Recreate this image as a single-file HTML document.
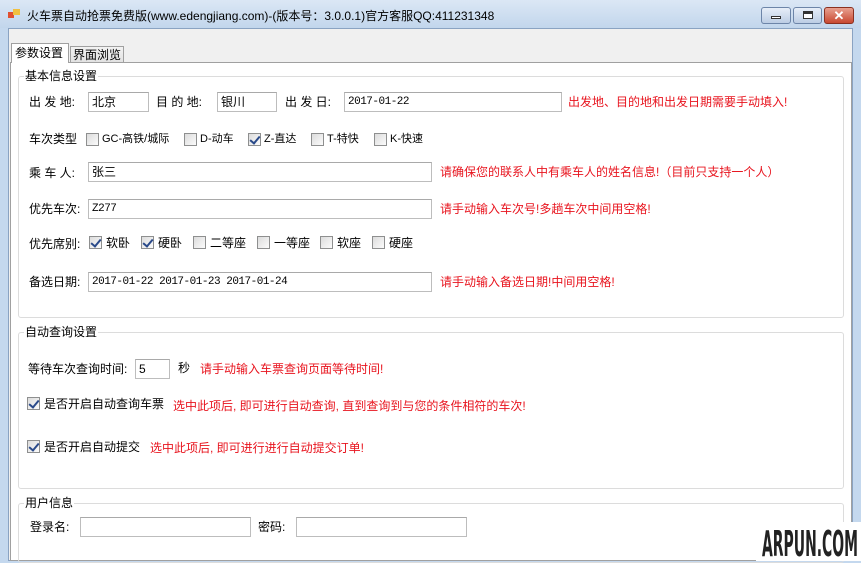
<!DOCTYPE html>
<html><head><meta charset="utf-8"><style>
*{margin:0;padding:0;box-sizing:border-box}
body{width:861px;height:561px;overflow:hidden;position:relative;background:#c4d8ee;font-family:"Liberation Sans","Noto Sans CJK SC",sans-serif;font-size:12px;color:#000}
.a{position:absolute;white-space:nowrap;line-height:14px}
.title{position:absolute;left:0;top:0;width:861px;height:28px;background:linear-gradient(#dbe7f5,#c2d6ec)}
.client{position:absolute;left:8px;top:28px;width:845px;height:533px;background:#f0f0f0;border:1px solid #8aa3c2}
.panel{position:absolute;left:10px;top:62px;width:842px;height:499px;background:#fff;border:1px solid #a0a0a0}
.grp{position:absolute;border:1px solid #dcdcdc;border-radius:3px}
.gl{position:absolute;background:#fff;padding:0 1px;line-height:14px}
.in{position:absolute;height:20px;border:1px solid #bdbdbd;border-top-color:#a9a9a9;background:#fff;font-size:11px;line-height:18px;padding-left:3px;font-family:"Liberation Mono","Noto Sans CJK SC",monospace;letter-spacing:-0.5px}
.in.c{font-family:"Liberation Sans","Noto Sans CJK SC",sans-serif;font-size:12px;letter-spacing:0}
.cb{position:absolute;width:13px;height:13px;border:1px solid #8e8f8f;background:linear-gradient(135deg,#dcdcdc,#fbfbfb)}
.cb.k::after{content:"";position:absolute;left:3px;top:0px;width:4px;height:8px;border:solid #2a4a8a;border-width:0 2px 2px 0;transform:rotate(40deg)}
.r{color:#e8141e}
.btn{position:absolute;top:7px;height:17px;border:1px solid #6d85a8;border-radius:3px;background:linear-gradient(#e7eef8,#bccde4)}
</style></head><body>
<div class="title"></div>
<div class="a" style="left:8px;top:9px;width:12px;height:10px"><div style="position:absolute;left:0;top:3px;width:6px;height:6px;background:#e05030"></div><div style="position:absolute;left:5px;top:0;width:7px;height:6px;background:#f0c040"></div></div>
<div class="a" style="left:27px;top:9px;font-size:12px">火车票自动抢票免费版(www.edengjiang.com)-(版本号：3.0.0.1)官方客服QQ:411231348</div>
<div class="btn" style="left:761px;width:30px"><div style="position:absolute;left:9px;top:8px;width:10px;height:3px;background:#fff;border:1px solid #333"></div></div>
<div class="btn" style="left:793px;width:29px"><div style="position:absolute;left:9px;top:3px;width:10px;height:8px;border:1px solid #333;border-top-width:3px;background:#fff"></div></div>
<div class="btn" style="left:824px;width:30px;background:linear-gradient(#e8a090,#c84830);border-color:#8a3020;color:#fff;font-weight:bold;text-align:center;line-height:15px;font-size:13px">✕</div>
<div class="client"></div>
<div class="a" style="left:70px;top:46px;width:54px;height:17px;border:1px solid #a0a0a0;background:linear-gradient(#f3f3f3,#e2e2e2);padding:1px 2px">界面浏览</div>
<div class="panel"></div>
<div class="a" style="left:11px;top:43px;width:58px;height:20px;border:1px solid #a0a0a0;border-bottom:none;background:#fff;padding:2px 3px">参数设置</div>

<div class="grp" style="left:18px;top:76px;width:826px;height:242px"></div>
<div class="gl" style="left:24px;top:69px">基本信息设置</div>
<div class="a" style="left:29px;top:95px">出 发 地:</div>
<div class="in c" style="left:88px;top:92px;width:61px">北京</div>
<div class="a" style="left:156px;top:95px">目 的 地:</div>
<div class="in c" style="left:217px;top:92px;width:60px">银川</div>
<div class="a" style="left:285px;top:95px">出 发 日:</div>
<div class="in" style="left:344px;top:92px;width:218px">2017-01-22</div>
<div class="a r" style="left:568px;top:95px">出发地、目的地和出发日期需要手动填入!</div>

<div class="a" style="left:29px;top:132px">车次类型</div>
<div class="cb" style="left:86px;top:133px"></div><div class="a" style="left:102px;top:132px;font-size:11px">GC-高铁/城际</div>
<div class="cb" style="left:184px;top:133px"></div><div class="a" style="left:200px;top:132px;font-size:11px">D-动车</div>
<div class="cb k" style="left:248px;top:133px"></div><div class="a" style="left:264px;top:132px;font-size:11px">Z-直达</div>
<div class="cb" style="left:311px;top:133px"></div><div class="a" style="left:327px;top:132px;font-size:11px">T-特快</div>
<div class="cb" style="left:374px;top:133px"></div><div class="a" style="left:390px;top:132px;font-size:11px">K-快速</div>

<div class="a" style="left:29px;top:166px">乘 车 人:</div>
<div class="in c" style="left:88px;top:162px;width:344px">张三</div>
<div class="a r" style="left:440px;top:165px">请确保您的联系人中有乘车人的姓名信息!（目前只支持一个人）</div>

<div class="a" style="left:29px;top:202px">优先车次:</div>
<div class="in" style="left:88px;top:199px;width:344px">Z277</div>
<div class="a r" style="left:440px;top:202px">请手动输入车次号!多趟车次中间用空格!</div>

<div class="a" style="left:29px;top:237px">优先席别:</div>
<div class="cb k" style="left:89px;top:236px"></div><div class="a" style="left:106px;top:236px">软卧</div>
<div class="cb k" style="left:141px;top:236px"></div><div class="a" style="left:158px;top:236px">硬卧</div>
<div class="cb" style="left:193px;top:236px"></div><div class="a" style="left:210px;top:236px">二等座</div>
<div class="cb" style="left:257px;top:236px"></div><div class="a" style="left:274px;top:236px">一等座</div>
<div class="cb" style="left:320px;top:236px"></div><div class="a" style="left:337px;top:236px">软座</div>
<div class="cb" style="left:372px;top:236px"></div><div class="a" style="left:389px;top:236px">硬座</div>

<div class="a" style="left:29px;top:275px">备选日期:</div>
<div class="in" style="left:88px;top:272px;width:344px">2017-01-22 2017-01-23 2017-01-24</div>
<div class="a r" style="left:440px;top:275px">请手动输入备选日期!中间用空格!</div>

<div class="grp" style="left:18px;top:332px;width:826px;height:157px"></div>
<div class="gl" style="left:24px;top:325px">自动查询设置</div>
<div class="a" style="left:28px;top:362px">等待车次查询时间:</div>
<div class="in c" style="left:135px;top:359px;width:35px">5</div>
<div class="a" style="left:178px;top:361px">秒</div>
<div class="a r" style="left:200px;top:362px">请手动输入车票查询页面等待时间!</div>
<div class="cb k" style="left:27px;top:397px"></div><div class="a" style="left:44px;top:397px">是否开启自动查询车票</div>
<div class="a r" style="left:173px;top:399px">选中此项后, 即可进行自动查询, 直到查询到与您的条件相符的车次!</div>
<div class="cb k" style="left:27px;top:440px"></div><div class="a" style="left:44px;top:440px">是否开启自动提交</div>
<div class="a r" style="left:150px;top:441px">选中此项后, 即可进行进行自动提交订单!</div>

<div class="grp" style="left:18px;top:503px;width:826px;height:60px"></div>
<div class="gl" style="left:24px;top:496px">用户信息</div>
<div class="a" style="left:30px;top:520px">登录名:</div>
<div class="in c" style="left:80px;top:517px;width:171px"></div>
<div class="a" style="left:258px;top:520px">密码:</div>
<div class="in c" style="left:296px;top:517px;width:171px"></div>

<svg style="position:absolute;left:756px;top:522px" width="105" height="39">
<rect x="0" y="0" width="105" height="39" fill="#fff"/>
<text x="6" y="34" font-family="DejaVu Sans, Liberation Sans, sans-serif" font-weight="bold" font-size="36" fill="#222" textLength="96" lengthAdjust="spacingAndGlyphs">ARPUN.COM</text>
</svg>
</body></html>
